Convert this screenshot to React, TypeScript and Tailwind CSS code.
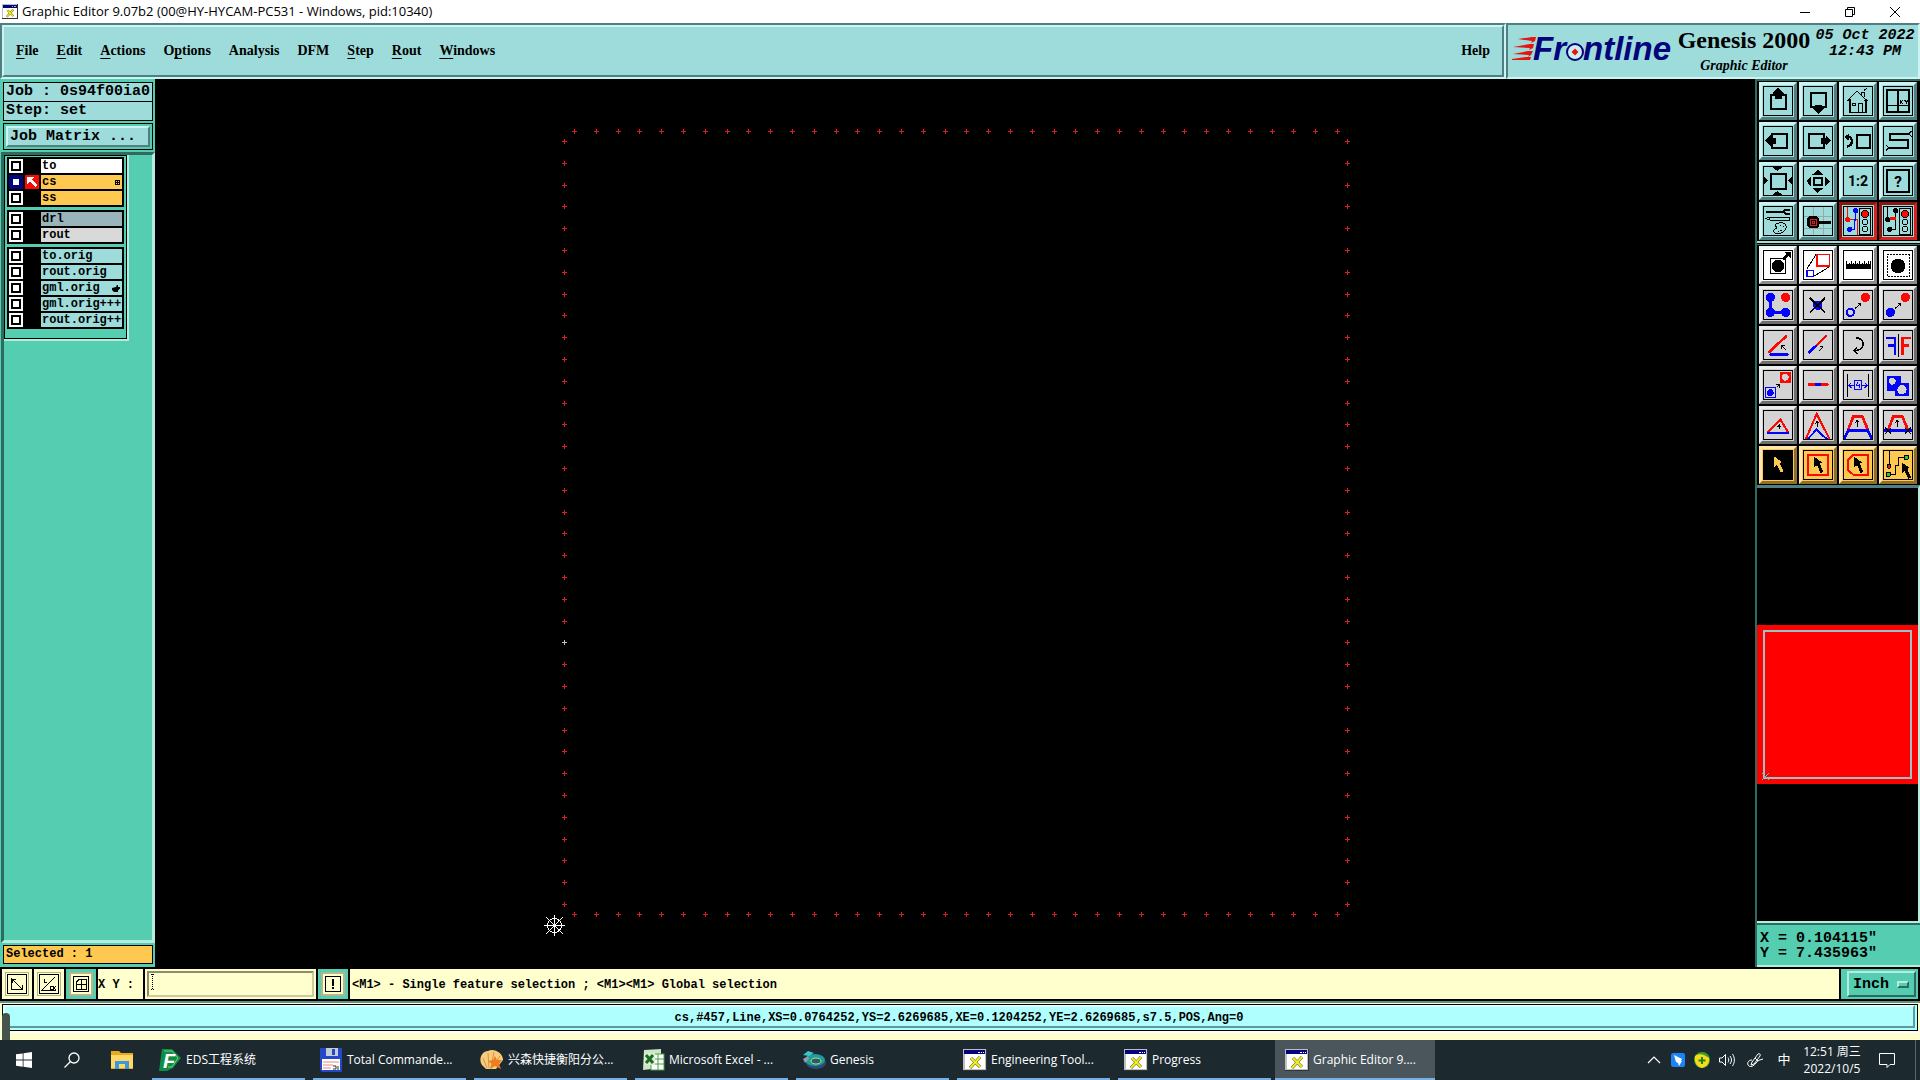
import React from "react";
import clsx from "clsx";

const UI = "font-['Open_Sans','Noto_Sans_CJK_SC',sans-serif]";
const MONO = "font-['Liberation_Mono',monospace] font-bold";
const SERIF = "font-['Liberation_Serif',serif] font-bold";

const RED = "#fb0a05";
const BLUE = "#0404fb";

/* menu */
const menu = [
  ["", "F", "ile"],
  ["", "E", "dit"],
  ["", "A", "ctions"],
  ["O", "p", "tions"],
  ["Analysis", "", ""],
  ["DFM", "", ""],
  ["", "S", "tep"],
  ["", "R", "out"],
  ["", "W", "indows"],
];

/* layer groups */
const layers = [
  [
    { name: "to", color: "bg-white" },
    { name: "cs", color: "bg-[#ffc850]", active: true, mark: "grid" },
    { name: "ss", color: "bg-[#ffc850]" },
  ],
  [
    { name: "drl", color: "bg-[#9ab4bc]" },
    { name: "rout", color: "bg-[#d9d9d9]" },
  ],
  [
    { name: "to.orig", color: "bg-[#9ddcdb]" },
    { name: "rout.orig", color: "bg-[#9ddcdb]" },
    { name: "gml.orig", color: "bg-[#9ddcdb]", mark: "hand" },
    { name: "gml.orig+++", color: "bg-[#9ddcdb]" },
    { name: "rout.orig+++", color: "bg-[#9ddcdb]" },
  ],
];

const Cursor = ({ x, y, fill = "#000" }: { x: number; y: number; fill?: string }) => (
  <path
    d="M0 0L24 17L17 20L28 45L20 49L9 26L1 32Z"
    transform={`translate(${x} ${y})`}
    fill={fill}
  />
);

const Arrow = ({ x1, y1, x2, y2 }: { x1: number; y1: number; x2: number; y2: number }) => {
  const a = Math.atan2(y2 - y1, x2 - x1);
  const p = (d: number) => `${x2 - 9 * Math.cos(a + d)} ${y2 - 9 * Math.sin(a + d)}`;
  return (
    <path d={`M${x1} ${y1}L${x2} ${y2}M${p(0.75)}L${x2} ${y2}L${p(-0.75)}`} stroke="#000" strokeWidth="3" fill="none" />
  );
};

const Light = ({ on = RED }: { on?: string }) => (
  <g stroke="#000" strokeWidth="3" fill="none">
    <rect x="49" y="6" width="34" height="80" />
    <circle cx="66" cy="24" r="11" fill={on} />
    <circle cx="66" cy="48" r="8" />
    <circle cx="66" cy="69" r="8" />
  </g>
);

type Tool = { label: string; tone: string; icon: React.ReactNode };

/* view tools */
const viewTools: Tool[] = [
  {
    label: "Pan up",
    tone: "teal",
    icon: (
      <g>
        <rect x="24" y="26" width="45" height="43" fill="none" stroke="#000" strokeWidth="6" />
        <path d="M46 5L63 22V27H56V39H37V27H29V22Z" />
      </g>
    ),
  },
  {
    label: "Pan down",
    tone: "teal",
    icon: (
      <g>
        <rect x="24" y="21" width="45" height="43" fill="none" stroke="#000" strokeWidth="6" />
        <path d="M46 85L64 67V62H56V56H37V62H29V67Z" />
      </g>
    ),
  },
  {
    label: "Home",
    tone: "teal",
    icon: (
      <g fill="none" stroke="#000" strokeWidth="3">
        <path d="M13 45L42 15L73 45M13 42H22M64 42H73" />
        <path d="M21 40V79H69V40" strokeWidth="4" />
        <path d="M54 26V18H63V34M62 14L72 6" />
        <rect x="28" y="51" width="8" height="8" />
        <path d="M45 79V51H58V79" />
      </g>
    ),
  },
  {
    label: "Window XY",
    tone: "teal",
    icon: (
      <g fill="none" stroke="#000">
        <rect x="12" y="12" width="67" height="67" strokeWidth="6" />
        <path d="M45 12V79M12 58H79" strokeWidth="4" />
        <path d="M51 43L59 53M59 43L51 53M65 43L70 48L76 43M70 48V54" strokeWidth="3" />
      </g>
    ),
  },
  {
    label: "Pan left",
    tone: "teal",
    icon: (
      <g>
        <rect x="28" y="23" width="45" height="43" fill="none" stroke="#000" strokeWidth="6" />
        <path d="M6 44L23 28V36H39V54H23V60Z" />
      </g>
    ),
  },
  {
    label: "Pan right",
    tone: "teal",
    icon: (
      <g>
        <rect x="18" y="23" width="45" height="43" fill="none" stroke="#000" strokeWidth="6" />
        <path d="M84 44L68 28V36H53V54H68V60Z" />
      </g>
    ),
  },
  {
    label: "Previous view",
    tone: "teal",
    icon: (
      <g fill="none" stroke="#000">
        <rect x="43" y="28" width="37" height="37" strokeWidth="6" />
        <path d="M16 33C30 32 32 58 12 62" strokeWidth="7" />
        <path d="M4 34L18 22V44Z" fill="#000" stroke="none" />
      </g>
    ),
  },
  {
    label: "Serpentine view",
    tone: "teal",
    icon: (
      <g fill="none" stroke="#000">
        <path d="M80 23H20V43H76V65H14" strokeWidth="6" />
        <path d="M76 24L85 15M79 24L85 32M10 58L16 65L9 74" strokeWidth="3" />
      </g>
    ),
  },
  {
    label: "Zoom in",
    tone: "teal",
    icon: (
      <g>
        <rect x="24" y="24" width="44" height="44" fill="none" stroke="#000" strokeWidth="5" />
        <path d="M28 4H58L43 15ZM28 86H58L43 75ZM2 30V58L15 44ZM88 30V58L74 44Z" />
      </g>
    ),
  },
  {
    label: "Zoom out",
    tone: "teal",
    icon: (
      <g>
        <rect x="33" y="35" width="24" height="22" fill="none" stroke="#000" strokeWidth="6" />
        <path d="M44 11L61 26H28ZM44 80L61 66H28ZM11 46L24 31V62ZM80 46L66 31V62Z" />
      </g>
    ),
  },
  {
    label: "Zoom 1:2",
    tone: "teal",
    icon: (
      <text x="45" y="60" textAnchor="middle" fontSize="42" fontWeight="bold" fontFamily="Roboto, sans-serif">
        1:2
      </text>
    ),
  },
  {
    label: "Help",
    tone: "teal",
    icon: (
      <g>
        <rect x="12" y="12" width="67" height="67" fill="none" stroke="#000" strokeWidth="5" />
        <text x="45" y="63" textAnchor="middle" fontSize="46" fontFamily="Roboto, sans-serif" fontWeight="bold">
          ?
        </text>
      </g>
    ),
  },
  {
    label: "Preferences",
    tone: "teal",
    icon: (
      <g fill="none" stroke="#000" strokeWidth="3">
        <path d="M9 17H58" strokeWidth="7" />
        <path d="M80 11H68L60 17L68 23H80" strokeWidth="6" />
        <path d="M8 38L20 33H78V42H20ZM20 33V42" />
        <path d="M44 52C60 47 74 54 68 68C62 84 36 88 32 76C30 68 42 70 40 64C38 58 34 56 44 52Z" />
        <path d="M50 58H54M60 62H64M52 74H56M44 76H47" />
      </g>
    ),
  },
  {
    label: "Magnifier",
    tone: "teal",
    icon: (
      <g>
        <path d="M30 2V88M60 2V88M2 30H88M2 66H88" stroke="#9aa8a8" strokeWidth="3" />
        <path d="M46 49H84" stroke="#000" strokeWidth="11" />
        <path d="M20 30H41L49 38V60L41 67H20L12 60V38Z" />
        <rect x="21" y="40" width="19" height="18" fill="none" stroke="#d8201c" strokeWidth="3" />
        <rect x="27" y="46" width="7" height="6" fill="none" stroke="#d8201c" strokeWidth="3" />
      </g>
    ),
  },
  {
    label: "Selected nets",
    tone: "red",
    icon: (
      <g>
        <path d="M14 4V41H42V86" fill="none" stroke={RED} strokeWidth="3" />
        <path d="M38 14V42H34V70H20" fill="none" stroke={BLUE} strokeWidth="4" />
        <circle cx="14" cy="41" r="8" fill={RED} />
        <circle cx="38" cy="14" r="8" fill={BLUE} />
        <circle cx="20" cy="70" r="8" fill={BLUE} />
        <Light />
      </g>
    ),
  },
  {
    label: "Net errors",
    tone: "red",
    icon: (
      <g>
        <path d="M14 4V41M38 14V70H20" fill="none" stroke="#000" strokeWidth="3" />
        <circle cx="14" cy="41" r="8" />
        <circle cx="38" cy="14" r="8" />
        <circle cx="20" cy="70" r="8" />
        <path d="M22 40H38M24 32V40M30 32V40M36 32V40" stroke={RED} strokeWidth="4" />
        <Light />
      </g>
    ),
  },
];

/* edit tools */
const editTools: Tool[] = [
  {
    label: "Move feature",
    tone: "white",
    icon: (
      <g>
        <rect x="22" y="25" width="46" height="45" fill="none" stroke="#000" strokeWidth="3" />
        <circle cx="45" cy="48" r="19" />
        <path d="M60 28L76 14" stroke="#000" strokeWidth="8" />
        <path d="M64 6H84V25Z" />
      </g>
    ),
  },
  {
    label: "Scale feature",
    tone: "white",
    icon: (
      <g fill="none">
        <path d="M11 58L40 12M34 78L78 51" stroke="#000" strokeWidth="3" />
        <rect x="42" y="13" width="37" height="35" stroke={RED} strokeWidth="5" />
        <rect x="12" y="61" width="19" height="18" stroke={BLUE} strokeWidth="5" />
      </g>
    ),
  },
  {
    label: "Measure",
    tone: "white",
    icon: (
      <g>
        <rect x="9" y="43" width="75" height="14" />
        <path d="M11 32V45M18 38V45M24 34V45M31 38V45M37 34V45M44 38V45M50 32V45M57 38V45M63 34V45M70 38V45M76 34V45M83 32V45" stroke="#000" strokeWidth="3" />
      </g>
    ),
  },
  {
    label: "Select feature",
    tone: "white",
    icon: (
      <g>
        <rect x="13" y="14" width="65" height="66" fill="none" stroke="#000" strokeWidth="3" strokeDasharray="6 3" />
        <circle cx="45" cy="48" r="22" />
      </g>
    ),
  },
  {
    label: "Copy step",
    tone: "gray",
    icon: (
      <g fill={BLUE}>
        <path d="M22 22V67H68" fill="none" stroke={BLUE} strokeWidth="8" />
        <circle cx="22" cy="22" r="14" />
        <circle cx="22" cy="67" r="14" />
        <circle cx="68" cy="67" r="14" />
        <circle cx="68" cy="22" r="14" fill={RED} />
      </g>
    ),
  },
  {
    label: "Delete feature",
    tone: "gray",
    icon: (
      <g>
        <circle cx="44" cy="46" r="14" fill={BLUE} />
        <path d="M21 24L66 68M66 24L21 68" stroke="#000" strokeWidth="5" />
      </g>
    ),
  },
  {
    label: "Move point",
    tone: "gray",
    icon: (
      <g>
        <circle cx="22" cy="67" r="11" fill="none" stroke={BLUE} strokeWidth="6" />
        <circle cx="67" cy="22" r="14" fill={RED} />
        <Arrow x1={36} y1={56} x2={53} y2={40} />
      </g>
    ),
  },
  {
    label: "Copy point",
    tone: "gray",
    icon: (
      <g>
        <circle cx="22" cy="67" r="14" fill={BLUE} />
        <circle cx="67" cy="22" r="14" fill={RED} />
        <Arrow x1={36} y1={56} x2={53} y2={40} />
      </g>
    ),
  },
  {
    label: "Change angle",
    tone: "gray",
    icon: (
      <g strokeLinecap="round" strokeWidth="8">
        <path d="M19 66L69 19" stroke={RED} />
        <path d="M23 74H73" stroke={BLUE} />
        <Arrow x1={69} y1={60} x2={57} y2={47} />
      </g>
    ),
  },
  {
    label: "Break line",
    tone: "gray",
    icon: (
      <g strokeLinecap="round" strokeWidth="8">
        <path d="M19 67L43 44" stroke={BLUE} />
        <path d="M44 43L68 19" stroke={RED} />
        <Arrow x1={48} y1={63} x2={60} y2={50} />
      </g>
    ),
  },
  {
    label: "Rotate",
    tone: "gray",
    icon: (
      <g fill="none" stroke="#000" strokeWidth="5">
        <path d="M38 23C70 26 66 62 36 62" />
        <path d="M42 53L33 62L43 72" />
      </g>
    ),
  },
  {
    label: "Mirror",
    tone: "gray",
    icon: (
      <g fill="none" strokeWidth="7">
        <path d="M46 13V82" stroke="#000" strokeWidth="3" />
        <path d="M35 74V23H9M35 46H15" stroke={BLUE} />
        <path d="M58 74V23H84M58 46H78" stroke={RED} />
      </g>
    ),
  },
  {
    label: "Change symbol",
    tone: "gray",
    icon: (
      <g>
        <rect x="51" y="6" width="32" height="32" fill={RED} />
        <circle cx="67" cy="22" r="10" fill="#d3d3d3" />
        <rect x="7" y="53" width="30" height="30" fill="none" stroke={BLUE} strokeWidth="3" />
        <circle cx="22" cy="68" r="10" fill={BLUE} />
        <Arrow x1={41} y1={52} x2={49} y2={44} />
      </g>
    ),
  },
  {
    label: "Cut line",
    tone: "gray",
    icon: (
      <g strokeWidth="8">
        <path d="M18 44H73" stroke={RED} strokeLinecap="round" />
        <path d="M36 44H54" stroke={BLUE} />
      </g>
    ),
  },
  {
    label: "Set distance",
    tone: "gray",
    icon: (
      <g fill="none" stroke={BLUE} strokeWidth="3">
        <path d="M13 12V82M76 12V82" stroke="#000" />
        <rect x="35" y="31" width="21" height="28" />
        <path d="M45 37L40 46H51M48 41V54" />
        <path d="M35 46H17M25 38L17 46L25 54M56 46H73M65 38L73 46L65 54" />
      </g>
    ),
  },
  {
    label: "Contourize",
    tone: "gray",
    icon: (
      <g fill={BLUE}>
        <path d="M12 18H55V38H77V79H37V62H12Z" />
        <circle cx="28" cy="34" r="10" fill="#d3d3d3" />
        <circle cx="57" cy="59" r="14" fill="#d3d3d3" />
      </g>
    ),
  },
  {
    label: "Stretch corner",
    tone: "gray",
    icon: (
      <g fill="none" strokeWidth="6">
        <path d="M13 68L52 28L76 68" stroke={RED} />
        <path d="M12 69H78" stroke={BLUE} strokeWidth="7" />
        <Arrow x1={49} y1={58} x2={49} y2={45} />
      </g>
    ),
  },
  {
    label: "Stretch peak",
    tone: "gray",
    icon: (
      <g fill="none" strokeWidth="6">
        <path d="M13 88L41 59L72 88" stroke={BLUE} />
        <path d="M8 88L41 12L80 88" stroke={RED} />
        <Arrow x1={43} y1={52} x2={43} y2={34} />
      </g>
    ),
  },
  {
    label: "Stretch segment",
    tone: "gray",
    icon: (
      <g fill="none" strokeWidth="8">
        <path d="M16 58L31 19H58L74 58" stroke={RED} />
        <path d="M3 86L16 61H74L87 86" stroke={BLUE} />
        <Arrow x1={43} y1={50} x2={43} y2={31} />
      </g>
    ),
  },
  {
    label: "Move segment",
    tone: "gray",
    icon: (
      <g fill="none" strokeWidth="8">
        <path d="M16 58L31 19H58L74 58" stroke={RED} />
        <path d="M2 62H88" stroke={BLUE} />
        <path d="M7 53L25 71M25 53L7 71M65 53L83 71M83 53L65 71" stroke="#000" strokeWidth="3" />
        <Arrow x1={43} y1={50} x2={43} y2={31} />
      </g>
    ),
  },
  {
    label: "Select single",
    tone: "gold",
    icon: (
      <g>
        <rect width="90" height="90" />
        <Cursor x={33} y={19} fill="#ffc850" />
      </g>
    ),
  },
  {
    label: "Select by frame",
    tone: "gold",
    icon: (
      <g>
        <rect x="15" y="14" width="61" height="61" fill="none" stroke={RED} strokeWidth="6" />
        <Cursor x={33} y={20} />
      </g>
    ),
  },
  {
    label: "Select by polygon",
    tone: "gold",
    icon: (
      <g>
        <path d="M32 14H76V75H32L15 60V31Z" fill="none" stroke={RED} strokeWidth="6" />
        <Cursor x={33} y={20} />
      </g>
    ),
  },
  {
    label: "Select net",
    tone: "gold",
    icon: (
      <g stroke="#000" strokeWidth="3">
        <path d="M18 2V45M22 73H38V45H47V22H66" fill="none" />
        <circle cx="18" cy="49" r="6" fill="#c8201c" />
        <circle cx="70" cy="22" r="7" fill="#20d030" />
        <circle cx="16" cy="73" r="7" fill="#20d030" />
        <g stroke="none">
          <Cursor x={56} y={37} />
        </g>
      </g>
    ),
  },
];

const tones: Record<string, string> = {
  teal: "bg-[#9ddcdb] border-t-[#cdf3f2] border-l-[#cdf3f2] border-b-[#4f7f80] border-r-[#4f7f80]",
  red: "bg-[#9ddcdb] border-t-[#8a1614] border-l-[#8a1614] border-b-[#d8201c] border-r-[#d8201c]",
  white: "bg-white border-t-[#f4f4f4] border-l-[#f4f4f4] border-b-[#8a8a8a] border-r-[#8a8a8a]",
  gray: "bg-[#d3d3d3] border-t-[#ececec] border-l-[#ececec] border-b-[#6e6e6e] border-r-[#6e6e6e]",
  gold: "bg-[#ffc850] border-t-[#ffe6ac] border-l-[#ffe6ac] border-b-[#8f6f2c] border-r-[#8f6f2c]",
};

const ToolGrid = ({ tools }: { tools: Tool[] }) => (
  <div className="grid grid-cols-[repeat(4,38px)] gap-[2px] bg-black pl-[2px]">
    {tools.map((t) => (
      <button
        key={t.label}
        aria-label={t.label}
        className={clsx("flex h-[38px] items-center justify-center border-3", tones[t.tone])}
      >
        <svg viewBox="0 0 90 90" className="h-[30px] w-[30px] shrink-0" shapeRendering="crispEdges">
          {t.icon}
          <rect x="1.5" y="1.5" width="87" height="87" fill="none" stroke="#000" strokeWidth="3" />
        </svg>
      </button>
    ))}
  </div>
);

const WindowIcon = ({ className }: { className?: string }) => (
  <svg viewBox="0 0 24 22" className={className} shapeRendering="crispEdges">
    <rect width="24" height="22" fill="#333" />
    <rect width="23" height="21" fill="#bdbdc4" />
    <rect x="2" y="2" width="20" height="18" fill="#fff" />
    <rect x="1" y="1" width="21" height="4" fill="#04047c" />
    <path d="M15 3H17M18 3H19M20 3H21" stroke="#fff" />
    <g shapeRendering="auto">
      <path d="M8 9L17 18M17 8L7 19" stroke="#55550a" strokeWidth="3" />
      <path d="M8 9L17 18M17 8L7 19" stroke="#f3ee24" strokeWidth="2" />
    </g>
  </svg>
);

/* pads along the four edges of the panel */
const Canvas = () => {
  const pads: { x: number; y: number; c: string }[] = [];
  for (let i = 0; i < 36; i++) {
    const d = Math.round(i * 21.8);
    pads.push({ x: 574 + d, y: 131, c: "#e01c1c" });
    pads.push({ x: 574 + d, y: 914, c: "#e01c1c" });
    pads.push({ x: 564, y: 141 + d, c: i === 23 ? "#b8c4c4" : "#e01c1c" });
    pads.push({ x: 1347, y: 141 + d, c: "#e01c1c" });
  }
  return (
    <svg viewBox="155 79 1600 888" className="h-full w-full" shapeRendering="crispEdges">
      {pads.map((p, i) => (
        <path key={i} d={`M${p.x - 2} ${p.y + 0.5}h5M${p.x + 0.5} ${p.y - 2}v5`} stroke={p.c} />
      ))}
      <g stroke="#fff" fill="none">
        <path d="M544 925.5h21M554.5 915v21" />
        <path d="M546 917l17 17M563 917l-17 17" />
        <circle cx="554.5" cy="925.5" r="7" />
        <rect x="553" y="924" width="3" height="3" fill="#fff" stroke="none" />
      </g>
    </svg>
  );
};

const TitleBar = () => (
  <div className={clsx("flex h-[23px] shrink-0 items-center bg-white text-[13px] text-black", UI)}>
    <WindowIcon className="ml-[2px] mr-1 h-[15px] w-4" />
    <span className="flex-1">Graphic Editor 9.07b2 (00@HY-HYCAM-PC531 - Windows, pid:10340)</span>
    <button aria-label="Minimize" className="flex w-[45px] justify-center">
      <svg viewBox="0 0 10 10" className="h-[10px] w-[10px]">
        <path d="M0 5.5H10" stroke="#000" />
      </svg>
    </button>
    <button aria-label="Restore" className="flex w-[45px] justify-center">
      <svg viewBox="0 0 10 10" className="h-[10px] w-[10px]" fill="none" stroke="#000">
        <path d="M0.5 2.5H7.5V9.5H0.5ZM2.5 2.5V0.5H9.5V7.5H7.5" />
      </svg>
    </button>
    <button aria-label="Close" className="flex w-[45px] justify-center">
      <svg viewBox="0 0 10 10" className="h-[10px] w-[10px]">
        <path d="M0 0L10 10M10 0L0 10" stroke="#000" />
      </svg>
    </button>
    <span className="w-[3px]" />
  </div>
);

const Header = () => (
  <div className="flex h-14 shrink-0 bg-[#9ddcdb] text-black">
    {/* menu bar */}
    <div className="flex-1 border-2 border-t-[#4f7f80] border-l-[#4f7f80] border-b-[#cdf3f2] border-r-[#cdf3f2]">
      <nav
        className={clsx(
          "flex h-full items-center gap-[18px] border-2 border-t-[#cdf3f2] border-l-[#cdf3f2] border-b-[#4f7f80] border-r-[#4f7f80] pr-3 pl-3 text-sm",
          SERIF
        )}
      >
        {menu.map(([a, b, c]) => (
          <button key={a + b + c}>
            {a}
            <span className="underline underline-offset-3">{b}</span>
            {c}
          </button>
        ))}
        <button className="ml-auto">Help</button>
      </nav>
    </div>

    {/* brand */}
    <div className="flex w-[414px] border-2 border-t-[#4f7f80] border-l-[#4f7f80] border-b-[#cdf3f2] border-r-[#cdf3f2] pl-1">
      <svg viewBox="1512 27 164 46" className="h-[46px] w-[164px]">
        <g fill="#e81410">
          <path d="M1518 41L1532 39H1536L1535 43L1531 45L1532 43ZM1513 49L1530 46H1534L1533 50L1529 52L1530 50ZM1513 56L1528 53H1533L1531 57L1528 59L1529 57ZM1512 61L1526 59H1531L1530 62H1512Z" />
        </g>
        <g fill="#04047c" fontFamily="Liberation Sans, sans-serif" fontWeight="bold" fontStyle="italic" fontSize="33">
          <text x="1533" y="62">Fr</text>
          <text x="1583" y="62">ntline</text>
        </g>
        <circle cx="1575" cy="54" r="8" fill="#cdeef0" stroke="#04047c" strokeWidth="2" />
        <path d="M1575 50.500L1578.500 54L1575 57.500L1571.500 54Z" fill="#e81410" />
      </svg>
      <div className={clsx("flex w-[136px] flex-col items-center pt-[1px]", SERIF)}>
        <span className="text-2xl leading-7 whitespace-nowrap">Genesis 2000</span>
        <span className="text-sm leading-6 italic">Graphic Editor</span>
      </div>
      <div className={clsx("flex flex-1 flex-col items-center pt-[3px] text-[15px] leading-4 italic", MONO)}>
        <span className="whitespace-nowrap">05 Oct 2022</span>
        <span className="whitespace-nowrap">12:43 PM</span>
      </div>
    </div>
  </div>
);

const LayerPanel = () => (
  <aside className={clsx("flex w-[155px] shrink-0 flex-col bg-[#55cdb0] pl-[1px] text-black", MONO)}>
    {/* job */}
    <div className="mx-[2px] mt-[3px] border border-black bg-[#9ddcdb] text-[15px] leading-[18px]">
      <div className="border-b border-black pl-[2px]">Job : 0s94f00ia0</div>
      <div className="pl-[2px]">Step: set</div>
    </div>
    <div className="mx-[2px] mt-[2px] border border-black p-[2px]">
      <button className="block h-[21px] w-full border-2 border-t-[#cdf3f2] border-l-[#cdf3f2] border-b-[#4f7f80] border-r-[#4f7f80] bg-[#9ddcdb] pl-[2px] text-left text-[15px] leading-[17px]">
        Job Matrix ...
      </button>
    </div>

    {/* layers */}
    <div className="mt-[2px] flex-1 border-3 border-t-[#2e6b5e] border-l-[#2e6b5e] border-b-[#b4ecdf] border-r-[#b4ecdf]">
      <div className="w-[125px] border-r-2 border-b-2 border-[#b4ecdf]">
        <div className="flex flex-col gap-[3px] border border-black px-[2px] pt-[1px] pb-[9px]">
          {layers.map((group, g) => (
            <div key={g} className="bg-black px-[2px] pt-[2px]">
              {group.map((l) => (
                <div key={l.name} className="flex h-4 gap-[2px] pb-[2px]">
                  <label
                    className={clsx("flex w-[14px] items-center justify-center", l.active ? "bg-[#04047c]" : "bg-white")}
                  >
                    <input
                      type="checkbox"
                      aria-label={l.name}
                      className={clsx(
                        "h-[10px] w-[10px] appearance-none border-2 bg-white",
                        l.active ? "border-[#04047c]" : "border-black"
                      )}
                    />
                  </label>
                  <div className={clsx("w-[14px]", l.active && "bg-[#fb0a05]")}>
                    {l.active && (
                      <svg viewBox="0 0 14 14" className="h-[14px] w-[14px]" shapeRendering="crispEdges">
                        <path d="M2 2H9L7 5L12 10L10 12L5 7L2 9Z" fill="#fff" />
                      </svg>
                    )}
                  </div>
                  <div className={clsx("flex min-w-0 flex-1 items-center overflow-hidden pl-[1px] text-xs leading-[14px]", l.color)}>
                    <span className="whitespace-nowrap">{l.name}</span>
                    {l.mark === "grid" && (
                      <svg viewBox="0 0 5 5" className="mr-[2px] ml-auto h-[5px] w-[5px]" shapeRendering="crispEdges">
                        <path d="M0 0H5V5H0ZM1 1V2H2V1ZM3 1V2H4V1ZM1 3V4H2V3ZM3 3V4H4V3Z" fillRule="evenodd" />
                      </svg>
                    )}
                    {l.mark === "hand" && (
                      <svg viewBox="0 0 8 7" className="mr-[2px] ml-auto h-[7px] w-2">
                        <path d="M0 3L4 2L5 0L6 0V2H8V4L7 4V5H6L6 7H2L0 5Z" />
                      </svg>
                    )}
                  </div>
                </div>
              ))}
            </div>
          ))}
        </div>
      </div>
    </div>
    <div className="mx-[2px] mt-[2px] mb-[3px] border border-black bg-[#ffc850] pl-[2px] text-xs leading-[17px]">
      Selected : 1
    </div>
  </aside>
);

const ToolPanel = () => (
  <aside className="flex w-[165px] shrink-0 flex-col border-l-2 border-[#2e6b5e] bg-black text-black">
    <div className="border-t-2 border-t-[#2e6b5e] pt-[1px]">
      <ToolGrid tools={viewTools} />
    </div>
    <div className="my-[1px] h-[2px] bg-[#a9dcd8]" />
    <div className="border-t border-[#2e6b5e] pt-[1px]">
      <ToolGrid tools={editTools} />
    </div>

    {/* overview */}
    <div className="mt-[1px] flex flex-1 items-center justify-center border-t-3 border-r-2 border-b-2 border-t-[#4f7f80] border-r-[#b4ecdf] border-b-[#b4ecdf]">
      <div className="h-[159px] w-full bg-[#ff0000] px-[6px] py-[5px]">
        <div className="relative h-full border-2 border-[#9fc0c4]">
          <svg viewBox="0 0 7 7" className="absolute -bottom-[3px] -left-[3px] h-[7px] w-[7px]">
            <path d="M0 0L7 7M7 0L0 7" stroke="#55cdb0" />
          </svg>
        </div>
      </div>
    </div>
    <div
      className={clsx(
        "border-t-2 border-b-2 border-t-[#2e6b5e] border-b-[#b4ecdf] bg-[#55cdb0] pt-[6px] pb-1 pl-[3px] text-[15px] leading-[15px]",
        MONO
      )}
    >
      <div>X = 0.104115"</div>
      <div>Y = 7.435963"</div>
    </div>
  </aside>
);

const creamBtn =
  "flex w-[30px] items-center justify-center border-2 border-[#ffffcd] bg-[#ffffcd] outline -outline-offset-4 outline-[#b8b48c]";
const tealBtn =
  "flex w-[30px] items-center justify-center border-3 border-[#55cdb0] bg-[#ffffcd] shadow-[inset_2px_2px_#b8b48c,inset_-2px_-2px_#b8b48c]";

const CommandBar = () => (
  <div className={clsx("flex h-[34px] shrink-0 gap-[2px] border-y-2 border-black bg-black pr-[2px] pl-[2px] text-xs text-black", MONO)}>
    <button aria-label="Snap off" className={creamBtn}>
      <svg viewBox="0 0 20 20" className="h-5 w-5" fill="none" stroke="#000" shapeRendering="crispEdges">
        <path d="M0.500 0.500H19.500V19.500H0.500ZM4.500 4V15.500H16M5 5L15 15M5 9V5H9M15 11V15H11" />
      </svg>
    </button>
    <button aria-label="Snap angle" className={creamBtn}>
      <svg viewBox="0 0 20 20" className="h-5 w-5" fill="none" stroke="#000" shapeRendering="crispEdges">
        <path d="M0.500 0.500H19.500V19.500H0.500ZM2 16.500H17M3 16L16 3M5.500 5V8H8M11.500 12.500H14.500V15.500H11.500ZM17 12L15 14L17 16" />
      </svg>
    </button>
    <button aria-label="Snap grid" className={tealBtn}>
      <svg viewBox="0 0 16 16" className="h-4 w-4" fill="none" stroke="#000" shapeRendering="crispEdges">
        <path d="M0.500 0.500H15.500V15.500H0.500ZM6 3.500H13.500V13.500H3.500V6L6 3.500M8.500 3V14M3 8.500H14" />
      </svg>
    </button>
    <label htmlFor="xy" className="flex w-[45px] items-center bg-[#ffffcd] pt-[2px] leading-[14px]">
      X Y :
    </label>
    <div className="flex w-[171px] bg-[#ffffcd] p-[2px]">
      <input
        id="xy"
        type="text"
        className="w-full border-2 border-t-[#8f8b6c] border-l-[#8f8b6c] border-b-[#cfcba0] border-r-[#cfcba0] bg-[#ffffcd] px-1 outline-none"
      />
      <svg viewBox="0 0 3 16" className="pointer-events-none absolute mt-[3px] ml-1 h-4 w-[3px]" shapeRendering="crispEdges">
        <path d="M1.500 0V16" stroke="#000" strokeDasharray="1 1" />
        <path d="M0 .5H1M2 .5H3M0 15.500H1M2 15.500H3" stroke="#000" />
      </svg>
    </div>
    <button aria-label="Alert" className={tealBtn}>
      <svg viewBox="0 0 16 16" className="h-4 w-4" fill="none" stroke="#000" shapeRendering="crispEdges">
        <rect x="0.500" y="0.500" width="15" height="15" />
        <path d="M8 3V10M8 11V13" strokeWidth="2" />
      </svg>
    </button>
    <div className="flex flex-1 items-center bg-[#ffffcd] pt-[2px] pl-[2px] whitespace-pre">
      &lt;M1&gt; - Single feature selection ; &lt;M1&gt;&lt;M1&gt; Global selection
    </div>
    <div className="relative w-[77px] bg-[#55cdb0] p-[2px] pl-[6px]">
      <select
        aria-label="Units"
        className="h-full w-full appearance-none border-2 border-t-[#b4ecdf] border-l-[#b4ecdf] border-b-[#2e6b5e] border-r-[#2e6b5e] bg-[#55cdb0] pt-[2px] pl-1 text-[15px] outline-none"
      >
        <option>Inch</option>
      </select>
      <span className="pointer-events-none absolute top-3 right-[9px] h-[7px] w-3 border-2 border-t-[#b4ecdf] border-l-[#b4ecdf] border-b-[#2e6b5e] border-r-[#2e6b5e]" />
    </div>
  </div>
);

const StatusBar = () => (
  <div className="relative flex h-[39px] shrink-0 flex-col border-t-2 border-[#5f8f90] bg-[#ffffcd] text-black">
    <div className="mx-[2px] mt-[1px] h-[27px] border border-black bg-[#b0ffff] pr-[2px] pb-[2px]">
      <div
        className={clsx(
          "flex h-full items-center justify-center border-2 border-t-[#dcffff] border-l-[#dcffff] border-b-[#5f9a9a] border-r-[#5f9a9a] pt-[2px] text-xs",
          MONO
        )}
      >
        cs,#457,Line,XS=0.0764252,YS=2.6269685,XE=0.1204252,YE=2.6269685,s7.5,POS,Ang=0
      </div>
    </div>
    <div className="h-[2px] bg-white" />
    <div className="absolute bottom-0 left-[2px] h-[27px] w-2 rounded-t bg-[#46524c]" />
  </div>
);

/* taskbar entries */
const tasks = [
  {
    label: "EDS工程系统",
    icon: (
      <svg viewBox="0 0 24 24" className="h-6 w-6">
        <path d="M4 1H14L23 10L15 20L9 23H1Z" fill="#0f8c46" />
        <path d="M6 3H14L20 10L14 19H10" fill="none" stroke="#6fd08c" />
        <text x="5" y="20" fontSize="20" fontWeight="bold" fontStyle="italic" fontFamily="Liberation Sans, sans-serif" fill="#fff">
          F
        </text>
      </svg>
    ),
  },
  {
    label: "Total Commande...",
    icon: (
      <svg viewBox="0 0 24 24" className="h-6 w-6">
        <path d="M1 0H23V24H3L1 22Z" fill="#2448c8" />
        <rect x="7" width="12" height="8" fill="#c4ccd8" />
        <rect x="13" y="1" width="3" height="6" fill="#2448c8" />
        <rect x="3" y="11" width="18" height="11" fill="#fff" />
        <path d="M4 14H20M4 17H14M4 20H12" stroke="#e88888" />
        <path d="M14 18h3v3h-3M19 18v4" stroke="#333" fill="none" />
      </svg>
    ),
  },
  {
    label: "兴森快捷衡阳分公...",
    icon: (
      <svg viewBox="0 0 24 24" className="h-6 w-6">
        <path d="M2 17C-2 11 2 3 8 3C14 0 23 5 23 12L16 21L6 21Z" fill="#f8cc7c" />
        <path d="M7 20L3 10M9 20L8 5M11 20L14 4M13 18L20 8" stroke="#d8943c" />
        <path d="M15 8L17 12L22 12L19 16L21 21L15 18L10 21L12 16L8 13L13 12Z" fill="#ee7c20" />
      </svg>
    ),
  },
  {
    label: "Microsoft Excel - ...",
    icon: (
      <svg viewBox="0 0 24 24" className="h-6 w-6">
        <path d="M3 2L20 1V20L2 22Z" fill="#cfe6c4" />
        <rect x="10" y="6" width="13" height="16" fill="#fff" stroke="#4e9a44" />
        <path d="M10 11H23M10 16H23M17 6V22" stroke="#4e9a44" />
        <rect x="3" y="5" width="11" height="12" fill="#d8efcf" />
        <path d="M5 7L12 15M12 7L5 15" stroke="#1f6a26" strokeWidth="3" />
      </svg>
    ),
  },
  {
    label: "Genesis",
    icon: (
      <svg viewBox="0 0 24 24" className="h-6 w-6">
        <ellipse cx="14" cy="15" rx="10" ry="6" fill="#2c4c78" />
        <ellipse cx="13" cy="12" rx="10" ry="6" fill="#1c9c9c" />
        <ellipse cx="14" cy="13" rx="5" ry="3" fill="#1c5c8c" stroke="#d8d840" />
        <path d="M1 7L6 3L12 5L7 8Z" fill="#38c8c8" />
        <path d="M1 11L6 8L7 11L3 15Z" fill="#8c9cac" />
      </svg>
    ),
  },
  { label: "Engineering Tool...", icon: <WindowIcon className="h-[22px] w-6" /> },
  { label: "Progress", icon: <WindowIcon className="h-[22px] w-6" /> },
  { label: "Graphic Editor 9....", icon: <WindowIcon className="h-[22px] w-6" />, active: true },
];

const Taskbar = () => (
  <footer className={clsx("flex h-10 shrink-0 bg-[#1c2a30] text-xs text-white", UI)}>
    <button aria-label="Start" className="flex w-12 items-center justify-center">
      <svg viewBox="0 0 16 16" className="h-4 w-4" fill="#fff">
        <path d="M0 2.300L6.700 1.400V7.600H0ZM7.500 1.300L16 0V7.600H7.500ZM0 8.400H6.700V14.700L0 13.700ZM7.500 8.400H16V16L7.500 14.800Z" />
      </svg>
    </button>
    <button aria-label="Search" className="flex w-12 items-center justify-center">
      <svg viewBox="0 0 16 16" className="h-4 w-4" fill="none" stroke="#fff" strokeWidth="1.300">
        <circle cx="10" cy="6" r="5" />
        <path d="M6.500 9.500L0.500 15.500" />
      </svg>
    </button>
    <button aria-label="File Explorer" className="mr-1 flex w-12 items-center justify-center pl-1">
      <svg viewBox="0 0 22 18" className="h-[18px] w-[22px]">
        <path d="M0 0H8L10 2H22V18H0Z" fill="#e8a820" />
        <rect y="4" width="22" height="13" fill="#ffd868" />
        <path d="M4 18V10H18V18H14V13H8V18Z" fill="#3c98dc" />
      </svg>
    </button>
    {tasks.map((t) => (
      <button
        key={t.label}
        className={clsx("flex flex-col", t.active ? "w-40 bg-[#4a565b]" : "w-[161px] px-1")}
      >
        <span className={clsx("flex w-full flex-1 items-center gap-1 overflow-hidden pt-[2px] whitespace-nowrap", t.active ? "pl-[10px]" : "pl-[6px]")}>
          <span className="w-6 shrink-0">{t.icon}</span>
          {t.label}
        </span>
        <span className="h-[2px] w-full bg-[#76b0e8]" />
      </button>
    ))}

    {/* tray */}
    <div className="ml-auto flex items-center gap-2">
      <button aria-label="Show hidden icons">
        <svg viewBox="0 0 16 16" className="h-4 w-4" fill="none" stroke="#fff" strokeWidth="1.200">
          <path d="M2 11L8 5L14 11" />
        </svg>
      </button>
      <svg viewBox="0 0 16 16" className="h-4 w-4">
        <rect x="1" y="1" width="14" height="14" rx="2" fill="#1c84f4" />
        <path d="M4 3L12 7L11 9L12 9L9 14L8 11L6 10Z" fill="#fff" />
      </svg>
      <svg viewBox="0 0 16 16" className="h-4 w-4">
        <circle cx="8" cy="8" r="8" fill="#3c9c2c" />
        <path d="M1 4C5 1 10 2 15 6C16 12 12 15 8 16C3 15 0 11 1 4Z" fill="#f4dc1c" />
        <path d="M8 5V12M4.500 8.500H11.500" stroke="#287c1c" strokeWidth="2" />
      </svg>
      <svg viewBox="0 0 18 16" className="h-4 w-[18px]" fill="none" stroke="#fff">
        <path d="M1.500 6H4L7.500 2.500V13.500L4 10H1.500ZM10 5.500C11 7 11 9 10 10.500M12 4C14 6.500 14 9.500 12 12M14.500 2C17 5.500 17 10.500 14.500 14" />
      </svg>
      <svg viewBox="0 0 18 16" className="mx-[2px] h-4 w-[18px]" fill="none" stroke="#fff">
        <path d="M6 10L12 2C13 1 15 2 14 4L8 12L5 13ZM6 8C3 8 1 10 2 13C4 16 8 14 10 11C12 8 14 8 17 7M9 6L12 9" />
      </svg>
      <span className="w-5 text-center text-[13px]">中</span>
      <div className="w-[60px] text-center leading-[17px] whitespace-nowrap">
        <div>12:51 周三</div>
        <div>2022/10/5</div>
      </div>
      <button aria-label="Notifications" className="mr-[11px] ml-2">
        <svg viewBox="0 0 18 18" className="h-[18px] w-[18px]" fill="none" stroke="#fff">
          <path d="M1.500 2.500H16.500V13.500H12L9 16.500V13.500H1.500Z" />
        </svg>
      </button>
      <span className="h-10 w-[5px] border-l border-[#5a666b]" />
    </div>
  </footer>
);

const App = () => {
  return (
    <div className="flex h-screen flex-col overflow-hidden bg-black">
      <TitleBar />
      <Header />
      <div className="flex min-h-0 flex-1">
        <LayerPanel />
        <main className="min-w-0 flex-1 bg-black">
          <Canvas />
        </main>
        <ToolPanel />
      </div>
      <CommandBar />
      <StatusBar />
      <Taskbar />
    </div>
  );
};

export default App;
